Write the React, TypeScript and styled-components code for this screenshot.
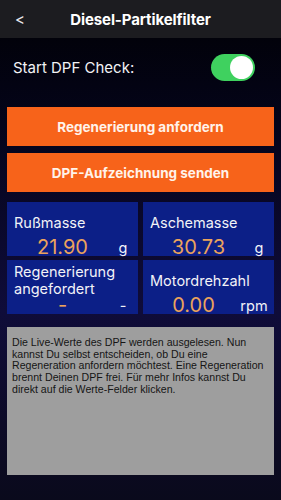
import React from "react";
import styled, { createGlobalStyle } from "styled-components";

const Global = createGlobalStyle`
  html, body { margin: 0; padding: 0; }
  body {
    width: 281px;
    height: 500px;
    overflow: hidden;
    background: #05050c;
    font-family: Inter, "Liberation Sans", sans-serif;
  }
`;

const Screen = styled.div`
  width: 281px;
  height: 500px;
  display: flex;
  flex-direction: column;
  background: linear-gradient(180deg, #010104 0%, #04041a 25%, #0f0c3a 62%, #0c0a26 85%, #0a0a1c 100%);
`;

const Header = styled.div`
  height: 38px;
  flex: none;
  background: #1c1c20;
  display: grid;
  grid-template-columns: 40px 1fr 40px;
  align-items: center;
  color: #fff;
`;

const Back = styled.div`
  font-size: 15px;
  padding-left: 15px;
  color: #e8e8ee;
`;

const Title = styled.div`
  text-align: center;
  font-size: 15px;
  font-weight: 700;
  letter-spacing: -0.1px;
`;

const ToggleRow = styled.div`
  height: 58px;
  display: flex;
  align-items: center;
  justify-content: space-between;
  padding: 0 26px 0 13px;
  color: #f2f2f5;
  font-size: 15px;
`;

const Switch = styled.div<{ on: boolean }>`
  width: 44px;
  height: 27px;
  border-radius: 14px;
  background: ${(p) => (p.on ? "#3fd15f" : "#555")};
  position: relative;
  &::after {
    content: "";
    position: absolute;
    top: 2px;
    left: ${(p) => (p.on ? "19px" : "2px")};
    width: 23px;
    height: 23px;
    border-radius: 50%;
    background: #fff;
  }
`;

const Content = styled.div`
  padding: 11px 7px 0;
  display: flex;
  flex-direction: column;
`;

const Button = styled.div`
  height: 39px;
  background: #f7631a;
  color: #fff3ea;
  font-weight: 700;
  font-size: 13.5px;
  display: flex;
  align-items: center;
  justify-content: center;
  margin-bottom: 7px;
`;

const Grid = styled.div`
  margin-top: 3px;
  display: grid;
  grid-template-columns: 1fr 1fr;
  column-gap: 5px;
  row-gap: 4px;
`;

const Cell = styled.div`
  height: 54px;
  background: #0c1f87;
  color: #f2f2f7;
  padding-top: 3px;
  box-sizing: border-box;
  display: flex;
  flex-direction: column;
`;

const Label = styled.div`
  height: 34px;
  display: flex;
  align-items: center;
  padding-left: 7px;
  font-size: 14.5px;
  line-height: 17px;
`;

const ValueRow = styled.div`
  display: flex;
  align-items: center;
  height: 17px;
`;

const Value = styled.div`
  flex: 1;
  text-align: center;
  padding-left: 10px;
  color: #eba35c;
  font-size: 20px;
  line-height: 17px;
`;

const Unit = styled.div<{ w: number }>`
  width: ${(p) => p.w}px;
  text-align: center;
  font-size: 14.5px;
  line-height: 17px;
`;

const InfoBox = styled.div`
  margin-top: 13px;
  height: 148px;
  background: #9e9e9e;
  color: #151515;
  font-family: "Liberation Sans", Arial, sans-serif;
  font-size: 10.6px;
  line-height: 11.7px;
  padding: 10px 3px 0 5px;
  box-sizing: border-box;
`;

const cells = [
  { label: "Rußmasse", value: "21.90", unit: "g", uw: 30 },
  { label: "Aschemasse", value: "30.73", unit: "g", uw: 30 },
  { label: "Regenerierung angefordert", value: "-", unit: "-", uw: 30 },
  { label: "Motordrehzahl", value: "0.00", unit: "rpm", uw: 40 },
];

export default function App() {
  return (
    <>
      <Global />
      <Screen>
        <Header>
          <Back>&lt;</Back>
          <Title>Diesel-Partikelfilter</Title>
          <div />
        </Header>
        <ToggleRow>
          <span>Start DPF Check:</span>
          <Switch on={true} />
        </ToggleRow>
        <Content>
          <Button>Regenerierung anfordern</Button>
          <Button>DPF-Aufzeichnung senden</Button>
          <Grid>
            {cells.map((c) => (
              <Cell key={c.label}>
                <Label>{c.label}</Label>
                <ValueRow>
                  <Value>{c.value}</Value>
                  <Unit w={c.uw}>{c.unit}</Unit>
                </ValueRow>
              </Cell>
            ))}
          </Grid>
          <InfoBox>
            Die Live-Werte des DPF werden ausgelesen. Nun kannst Du selbst entscheiden, ob Du eine
            Regeneration anfordern möchtest. Eine Regeneration brennt Deinen DPF frei. Für mehr Infos
            kannst Du direkt auf die Werte-Felder klicken.
          </InfoBox>
        </Content>
      </Screen>
    </>
  );
}
